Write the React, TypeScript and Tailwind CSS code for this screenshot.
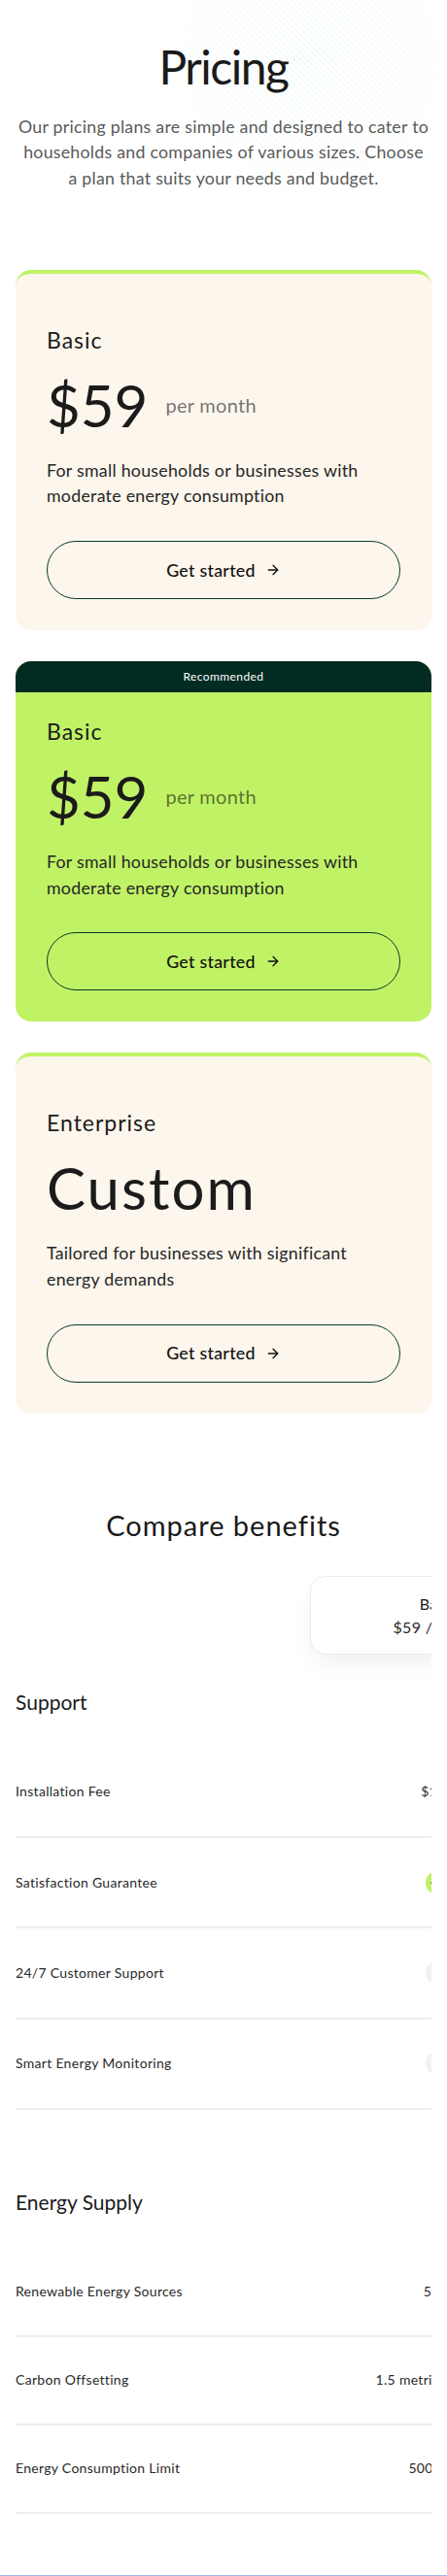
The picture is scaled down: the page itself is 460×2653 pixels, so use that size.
import { ArrowRight, Check, Minus } from "lucide-react";

type Plan = {
  name: string;
  price: string;
  perMonth: boolean;
  desc: string[];
  rec?: boolean;
};

const plans: Plan[] = [
  {
    name: "Basic",
    price: "$59",
    perMonth: true,
    desc: ["For small households or businesses with", "moderate energy consumption"],
  },
  {
    name: "Basic",
    price: "$59",
    perMonth: true,
    desc: ["For small households or businesses with", "moderate energy consumption"],
    rec: true,
  },
  {
    name: "Enterprise",
    price: "Custom",
    perMonth: false,
    desc: ["Tailored for businesses with significant", "energy demands"],
  },
];

function PlanCard({ plan }: { plan: Plan }) {
  return (
    <div
      className={
        plan.rec
          ? "overflow-hidden rounded-2xl bg-[#c0f266]"
          : "rounded-2xl border-t-4 border-[#c0f266] bg-[#fcf6ec]"
      }
    >
      {plan.rec ? (
        <div className="flex h-8 items-center justify-center bg-[#022c22] text-[12px] leading-4 tracking-[0.4px] text-white">
          Recommended
        </div>
      ) : (
        <div className="h-7" />
      )}
      <div className="px-8 pb-8">
        <div className="pt-6 text-[23px] leading-8 tracking-[1px] text-[#1b1b1b]">{plan.name}</div>
        <div className="mt-[21px] flex h-[60px] items-center">
          <span
            className={
              plan.perMonth
                ? "text-[60px] leading-[60px] text-[#1b1b1b]"
                : "text-[60px] leading-[60px] tracking-[2px] text-[#1b1b1b]"
            }
          >
            {plan.price}
          </span>
          {plan.perMonth && (
            <span className="ml-[18px] text-[20px] leading-7 tracking-[0.3px] text-black/55">per month</span>
          )}
        </div>
        <p className="mt-[23.7px] text-[17.78px] leading-[26.67px] tracking-[0.26px] text-[#262626]">
          {plan.desc.map((l) => (
            <span key={l} className="block whitespace-nowrap">
              {l}
            </span>
          ))}
        </p>
        <button className="mt-[33.2px] flex h-[60px] w-full items-center justify-center gap-2.5 rounded-full border border-[#0b3a26] text-[17.78px] font-medium tracking-[0.3px] text-[#111111]">
          <span>Get started</span>
          <ArrowRight size={16} strokeWidth={2} />
        </button>
      </div>
    </div>
  );
}

function CheckYes() {
  return (
    <span className="flex h-6 w-6 items-center justify-center rounded-full bg-[#c0f266] text-[#0f2a1a]">
      <Check size={18} strokeWidth={2} />
    </span>
  );
}

function CheckNo() {
  return (
    <span className="flex h-6 w-6 items-center justify-center rounded-full bg-[#f1f1f1] text-[#8a8a8a]">
      <Minus size={18} strokeWidth={2} />
    </span>
  );
}

type Cell = string;

function Row({ label, cells, h }: { label: string; cells: Cell[]; h: string }) {
  return (
    <div className={`flex items-center border-b-2 border-[#ededed] ${h}`}>
      <div className="w-[303px] shrink-0 text-[14px] leading-5 tracking-[0.3px] text-[#2a2a2a]">{label}</div>
      {cells.map((c, i) => (
        <div
          key={i}
          className="flex w-[262px] shrink-0 justify-center text-[14px] leading-5 tracking-[0.3px] text-[#2a2a2a]"
        >
          {c === "yes" ? <CheckYes /> : c === "no" ? <CheckNo /> : <span className="whitespace-nowrap">{c}</span>}
        </div>
      ))}
    </div>
  );
}

export default function App() {
  return (
    <div className="relative w-[460px] overflow-hidden bg-white font-[Lato,'Noto_Sans',sans-serif] text-[#1b1b1b]">
      {/* hero */}
      <section className="relative">
        <svg
          className="pointer-events-none absolute left-[170px] top-[-90px]"
          width="300"
          height="300"
          viewBox="0 0 300 300"
        >
          <defs>
            <pattern
              id="diag"
              width="4.5"
              height="4.5"
              patternUnits="userSpaceOnUse"
              patternTransform="rotate(-45)"
            >
              <line x1="0" y1="0" x2="0" y2="4.5" stroke="#b9e2da" strokeWidth="0.8" />
            </pattern>
            <radialGradient id="fade" cx="50%" cy="50%" r="50%">
              <stop offset="0%" stopColor="white" stopOpacity="1" />
              <stop offset="60%" stopColor="white" stopOpacity="0.6" />
              <stop offset="100%" stopColor="white" stopOpacity="0" />
            </radialGradient>
            <mask id="fmask">
              <rect width="300" height="300" fill="url(#fade)" />
            </mask>
          </defs>
          <rect width="300" height="300" fill="url(#diag)" mask="url(#fmask)" opacity="0.7" />
        </svg>
        <div className="relative px-4 pt-[41px]">
          <h1 className="text-center text-[48px] font-normal leading-[56px] tracking-[-1.5px] text-[#1a1a1a]">
            Pricing
          </h1>
          <p className="mt-[19.5px] text-center text-[17.78px] leading-[26.67px] tracking-[0.25px] text-[#5a5a5a]">
            <span className="block whitespace-nowrap">Our pricing plans are simple and designed to cater to</span>
            <span className="block whitespace-nowrap">households and companies of various sizes. Choose</span>
            <span className="block whitespace-nowrap">a plan that suits your needs and budget.</span>
          </p>
        </div>
      </section>

      {/* cards */}
      <section className="mt-[81.5px] flex flex-col gap-8 px-4">
        {plans.map((p, i) => (
          <PlanCard key={i} plan={p} />
        ))}
      </section>

      {/* compare */}
      <section className="mt-[97px]">
        <h2 className="text-center text-[29px] font-normal leading-9 tracking-[1px] text-[#1a1a1a]">
          Compare benefits
        </h2>
        <div className="mx-4 overflow-hidden">
          <div className="w-[1089px]">
            <div className="mt-[34.4px] flex">
              <div className="w-[303px] shrink-0" />
              <div className="flex h-[81px] w-[786px] items-center rounded-2xl border border-[#ebebeb] bg-white shadow-[0_12px_24px_-6px_rgba(0,0,0,0.08)]">
                <div className="flex w-[262px] flex-col items-center text-[16px] leading-6 tracking-[0.3px]">
                  <span className="text-[#1b1b1b]">Basic</span>
                  <span className="text-[#2a2a2a]">$59 / month</span>
                </div>
                <div className="flex w-[262px] flex-col items-center text-[16px] leading-6 tracking-[0.3px]">
                  <span className="text-[#1b1b1b]">Basic</span>
                  <span className="text-[#2a2a2a]">$59 / month</span>
                </div>
                <div className="flex w-[262px] flex-col items-center text-[16px] leading-6 tracking-[0.3px]">
                  <span className="text-[#1b1b1b]">Enterprise</span>
                  <span className="text-[#2a2a2a]">Custom</span>
                </div>
              </div>
            </div>

            <h3 className="mt-[35px] text-[21px] font-normal leading-7 text-[#1b1b1b]">Support</h3>
            <div className="mt-[32.5px]">
              <Row h="h-[93.33px]" label="Installation Fee" cells={["$199", "$199", "Free"]} />
              <Row h="h-[93.33px]" label="Satisfaction Guarantee" cells={["yes", "yes", "yes"]} />
              <Row h="h-[93.33px]" label="24/7 Customer Support" cells={["no", "yes", "yes"]} />
              <Row h="h-[93.33px]" label="Smart Energy Monitoring" cells={["no", "yes", "yes"]} />
            </div>

            <h3 className="mt-[81.2px] text-[21px] font-normal leading-7 text-[#1b1b1b]">Energy Supply</h3>
            <div className="mt-[33.8px]">
              <Row h="h-[91px]" label="Renewable Energy Sources" cells={["50%", "75%", "100%"]} />
              <Row
                h="h-[91px]"
                label="Carbon Offsetting"
                cells={["1.5 metric tons CO₂", "3 metric tons CO₂", "Custom"]}
              />
              <Row h="h-[91px]" label="Energy Consumption Limit" cells={["500 kWh", "1000 kWh", "Unlimited"]} />
            </div>
          </div>
        </div>
        <div className="h-[63.3px]" />
        <div className="h-px bg-[#a3b4ea]" />
      </section>
    </div>
  );
}
